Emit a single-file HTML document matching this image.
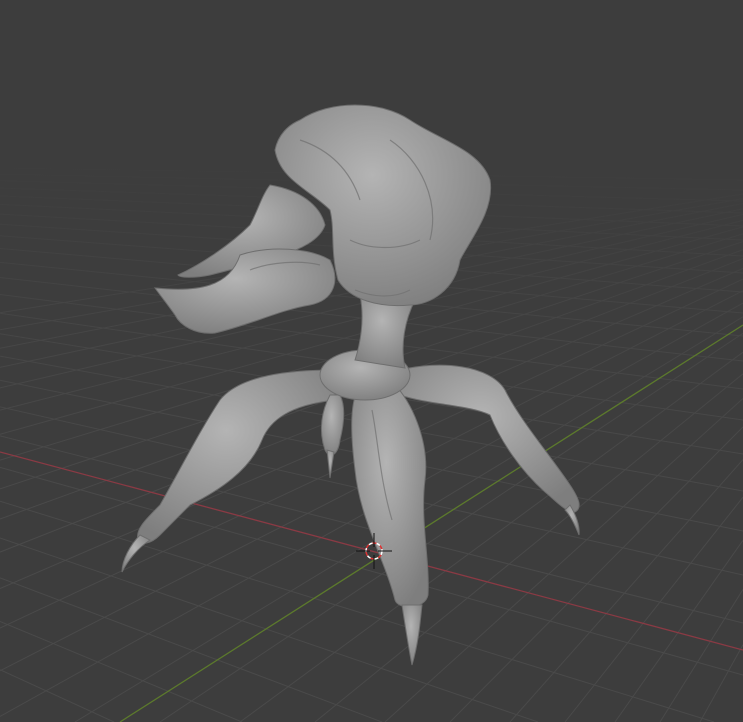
<!DOCTYPE html>
<html><head><meta charset="utf-8"><style>
html,body{margin:0;padding:0;background:#3d3d3d;overflow:hidden;width:743px;height:722px}
svg{display:block;position:absolute;left:0;top:0}
</style></head><body>
<svg width="743" height="722" viewBox="0 0 743 722" xmlns="http://www.w3.org/2000/svg">
<defs>
<linearGradient id="fade" x1="0" y1="0" x2="0" y2="1">
<stop offset="0" stop-color="#3d3d3d" stop-opacity="1"/>
<stop offset="0.22" stop-color="#3d3d3d" stop-opacity="1"/>
<stop offset="0.45" stop-color="#3d3d3d" stop-opacity="0.3"/>
<stop offset="0.7" stop-color="#3d3d3d" stop-opacity="0"/>
</linearGradient>
<radialGradient id="body" cx="0.45" cy="0.35" r="0.7">
<stop offset="0" stop-color="#b4b4b4"/><stop offset="1" stop-color="#7e7e7e"/>
</radialGradient>
</defs>
<rect width="743" height="722" fill="#3d3d3d"/>
<g stroke="#4a4a4a" stroke-width="1">
<line x1="0" y1="168.1" x2="743" y2="180"/><line x1="0" y1="174.2" x2="743" y2="190"/>
<line x1="0" y1="180.8" x2="743" y2="201"/><line x1="0" y1="188.1" x2="743" y2="213"/>
<line x1="0" y1="196" x2="743" y2="226"/><line x1="0" y1="204.4" x2="743" y2="240"/>
<line x1="0" y1="214.1" x2="743" y2="256"/><line x1="0" y1="224.3" x2="743" y2="273"/>
<line x1="0" y1="235.8" x2="743" y2="292"/><line x1="0" y1="248.5" x2="743" y2="313"/>
<line x1="0" y1="262.4" x2="743" y2="336"/><line x1="0" y1="277.5" x2="743" y2="361"/>
<line x1="0" y1="294.5" x2="743" y2="389"/><line x1="0" y1="313.2" x2="743" y2="420"/>
<line x1="0" y1="333.8" x2="743" y2="454"/><line x1="0" y1="356.1" x2="743" y2="491"/>
<line x1="0" y1="380.3" x2="743" y2="531"/><line x1="0" y1="406.9" x2="743" y2="575"/>
<line x1="0" y1="435.9" x2="743" y2="623"/><line x1="0" y1="467.3" x2="743" y2="675"/>
<line x1="0" y1="501.2" x2="714" y2="722"/><line x1="0" y1="538" x2="538" y2="722"/>
<line x1="0" y1="577.9" x2="382" y2="722"/><line x1="0" y1="621.4" x2="242" y2="722"/>
<line x1="0" y1="669.7" x2="114" y2="722"/>

<line x1="743" y1="644.7" x2="700" y2="722"/><line x1="743" y1="589.4" x2="660" y2="722"/>
<line x1="743" y1="540.3" x2="615" y2="722"/><line x1="743" y1="497.2" x2="565" y2="722"/>
<line x1="743" y1="459.6" x2="510" y2="722"/><line x1="743" y1="426.9" x2="450" y2="722"/>
<line x1="743" y1="398.5" x2="385" y2="722"/><line x1="743" y1="373.8" x2="315" y2="722"/>
<line x1="743" y1="352.2" x2="240" y2="722"/><line x1="743" y1="333.3" x2="160" y2="722"/>
<line x1="743" y1="316.8" x2="75" y2="722"/><line x1="743" y1="303" x2="0" y2="716.4"/>
<line x1="743" y1="290.7" x2="0" y2="670.8"/><line x1="743" y1="279.1" x2="0" y2="628.1"/>
<line x1="743" y1="268.4" x2="0" y2="588.5"/><line x1="743" y1="258.6" x2="0" y2="552.1"/>
<line x1="743" y1="249.7" x2="0" y2="519"/><line x1="743" y1="241.6" x2="0" y2="488.9"/>
<line x1="743" y1="233.8" x2="0" y2="460.1"/><line x1="743" y1="226.8" x2="0" y2="434.3"/>
<line x1="743" y1="220.3" x2="0" y2="410.2"/><line x1="743" y1="214.3" x2="0" y2="387.9"/>
<line x1="743" y1="208.7" x2="0" y2="367.4"/><line x1="743" y1="203.5" x2="0" y2="348.2"/>
<line x1="743" y1="198.6" x2="0" y2="329.8"/><line x1="743" y1="194" x2="0" y2="312.7"/>
</g>
<rect width="743" height="722" fill="url(#fade)"/>
<line x1="0" y1="452" x2="743" y2="650" stroke="#8a3a44" stroke-width="1.3"/>
<line x1="120" y1="722" x2="743" y2="325" stroke="#5c7a2c" stroke-width="1.3"/>
<g fill="url(#body)" stroke="#6e6e6e" stroke-width="1">
<path d="M335,370 C290,370 240,375 220,400 C200,430 180,470 160,505 C145,520 135,530 138,540 C140,545 150,545 160,535 L190,505 C220,490 250,470 262,440 C270,420 290,405 335,400 Z"/>
<path d="M140,535 C130,545 122,560 122,572 C128,560 138,548 150,540 Z"/>
<path d="M400,370 C440,360 490,365 505,390 C520,420 550,455 570,485 C580,500 582,508 575,512 C565,512 555,500 545,492 C520,470 500,440 490,415 C470,405 430,405 400,395 Z"/>
<path d="M570,505 C576,515 580,525 579,535 C575,525 570,515 565,510 Z"/>
<path d="M360,385 C350,400 350,430 355,470 C360,520 385,560 395,600 C398,610 425,610 428,595 C430,560 420,520 425,480 C430,440 410,400 395,385 Z"/>
<path d="M402,605 C405,625 408,645 412,665 C418,645 420,625 422,605 Z"/>
<path d="M330,395 C322,410 318,430 325,450 C330,460 338,455 340,440 C345,420 345,405 340,395 Z"/>
<path d="M327,450 L330,478 L334,452 Z"/>
<ellipse cx="365" cy="375" rx="45" ry="25"/>
<path d="M360,295 C365,320 360,345 355,360 L405,368 C400,345 405,320 415,300 Z"/>
<path d="M300,120 C330,100 380,100 410,120 C440,140 480,150 490,180 C495,210 470,240 460,260 C455,290 430,305 410,305 C380,308 350,300 338,280 C330,250 335,230 330,210 C310,190 280,180 275,150 C278,135 288,125 300,120 Z"/>
<path d="M270,185 C300,190 320,205 325,225 C320,240 300,250 280,255 C260,262 230,270 210,275 C195,278 180,278 178,275 C200,265 230,245 250,225 C258,210 262,195 270,185 Z"/>
<path d="M240,255 C270,245 310,248 330,260 C340,280 335,300 310,305 C280,310 250,325 215,333 C195,335 180,325 175,315 C168,305 160,295 155,288 C175,290 195,290 210,285 C225,280 235,270 240,255 Z"/>
</g>
<g fill="none" stroke="#707070" stroke-width="1.2" opacity="0.7">
<path d="M300,140 C330,150 350,170 360,200"/><path d="M390,140 C420,160 440,200 430,240"/>
<path d="M350,240 C370,250 400,250 420,240"/><path d="M355,290 C375,298 395,298 410,290"/>
<path d="M250,270 C270,262 300,260 320,265"/><path d="M372,410 C378,440 380,480 392,520"/>
</g>
<g transform="translate(374,551)">
<circle r="8" fill="none" stroke="#ffffff" stroke-width="1.5" stroke-dasharray="4,4"/>
<circle r="8" fill="none" stroke="#d33" stroke-width="1.5" stroke-dasharray="4,4" stroke-dashoffset="4"/>
<line x1="0" y1="-18" x2="0" y2="-4" stroke="#111" stroke-width="1"/>
<line x1="0" y1="4" x2="0" y2="18" stroke="#111" stroke-width="1"/>
<line x1="-18" y1="0" x2="-4" y2="0" stroke="#111" stroke-width="1"/>
<line x1="4" y1="0" x2="18" y2="0" stroke="#111" stroke-width="1"/>
</g>
</svg>
</body></html>
